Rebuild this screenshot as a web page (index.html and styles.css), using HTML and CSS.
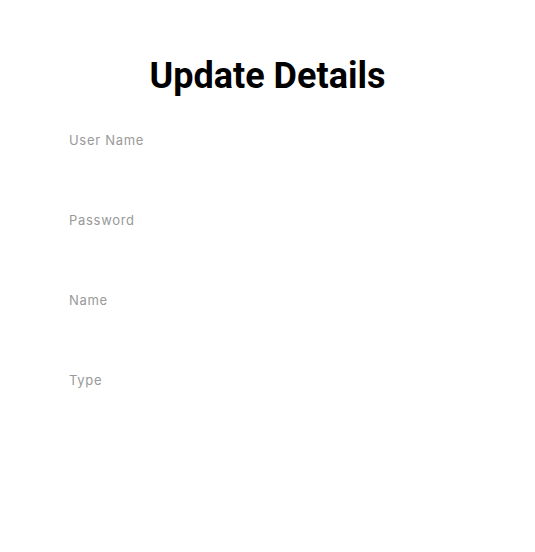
FILE: index.html
```html
<!DOCTYPE html>
<html>
<head>
<meta charset="utf-8">
<link rel="stylesheet" href="styles.css">
</head>
<body>
<div class="page">
  <h1 class="title">Update Details</h1>
  <form class="form">
    <div class="field"><label class="label">User Name</label><input class="input" type="text"></div>
    <div class="field"><label class="label">Password</label><input class="input" type="password"></div>
    <div class="field"><label class="label">Name</label><input class="input" type="text"></div>
    <div class="field"><label class="label">Type</label><input class="input" type="text"></div>
  </form>
</div>
</body>
</html>
```
FILE: styles.css
```css
html, body { margin: 0; padding: 0; background: #fff; }
.page { width: 535px; display: flex; flex-direction: column; align-items: center; }
.title {
  font-family: Roboto, "Liberation Sans", sans-serif;
  font-weight: 700;
  font-size: 36px;
  line-height: 40px;
  margin: 56px 0 0 0;
  color: #000;
}
.form { width: 400px; margin-top: 34px; display: flex; flex-direction: column; align-self: flex-start; margin-left: 69px; }
.field { height: 80px; display: flex; flex-direction: column; }
.label {
  font-family: Inter, "Liberation Sans", sans-serif;
  font-size: 13px;
  line-height: 20px;
  color: #999;
  letter-spacing: 0.7px;
}
.input { border: none; outline: none; height: 30px; padding: 0; background: transparent; }
```
